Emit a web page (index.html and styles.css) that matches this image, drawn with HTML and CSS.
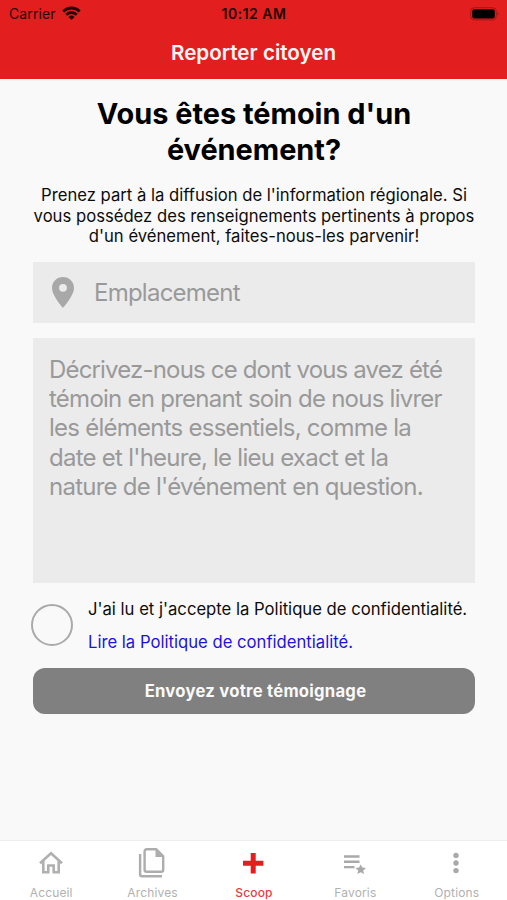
FILE: index.html
```html
<!DOCTYPE html>
<html lang="fr">
<head>
<meta charset="utf-8">
<title>Reporter citoyen</title>
<link rel="stylesheet" href="styles.css">
</head>
<body>
<div class="app">
  <header class="header">
    <div class="status">
      <div class="status-left">
        <span class="carrier">Carrier</span>
        <svg class="wifi" width="19" height="14" viewBox="0 0 19 14"><g fill="none" stroke="#240403" stroke-width="2.8"><path d="M1.3 5.4a11.6 11.6 0 0 1 16.4 0"/><path d="M4.3 8.7a7.3 7.3 0 0 1 10.400 0"/></g><path fill="#240403" d="M9.5 13.900 6.500 10.900a4.300 4.300 0 0 1 6 0z"/></svg>
      </div>
      <span class="time">10:12 AM</span>
      <svg class="battery" width="30" height="14" viewBox="0 0 30 14"><rect x=".7" y=".7" width="25.6" height="12.2" rx="3.6" fill="none" stroke="#a31513"/><rect x="2.2" y="2.2" width="22.6" height="9.2" rx="2.2"/><path fill="#8f1211" d="M27.6 4.8q1.8 2 0 4z"/></svg>
    </div>
    <div class="title">Reporter citoyen</div>
  </header>
  <main class="content">
    <h1 class="heading">Vous êtes témoin d'un<br>événement?</h1>
    <p class="intro">Prenez part à la diffusion de l'information régionale. Si<br>vous possédez des renseignements pertinents à propos<br>d'un événement, faites-nous-les parvenir!</p>
    <div class="field">
      <svg class="pin" width="22" height="31" viewBox="5 2 14 20" preserveAspectRatio="none"><path fill="#a8a8a8" d="M12 2C8.13 2 5 5.13 5 9c0 5.25 7 13 7 13s7-7.75 7-13c0-3.87-3.13-7-7-7zm0 9.500a2.500 2.500 0 1 1 0-5 2.500 2.500 0 0 1 0 5z"/></svg>
      <span>Emplacement</span>
    </div>
    <div class="area"><span class="first">Décrivez-nous ce dont vous avez été</span><br>témoin en prenant soin de nous livrer<br>les éléments essentiels, comme la<br>date et l'heure, le lieu exact et la<br>nature de l'événement en question.</div>
    <div class="consent">
      <span class="radio"></span>
      <div class="consent-text">
        <span class="accept">J'ai lu et j'accepte la Politique de confidentialité.</span>
        <a class="link">Lire la Politique de confidentialité.</a>
      </div>
    </div>
    <div class="button">Envoyez votre témoignage</div>
  </main>
  <nav class="tabs">
    <div class="tab"><svg width="32" height="32" viewBox="0 0 32 32"><path fill="none" stroke="#b0b0b0" stroke-width="2.6" d="M5 16.300 16 6.300 27 16.300M8.300 14v11.200h5v-6.700h5.400v6.700h5V14"/></svg><span>Accueil</span></div>
    <div class="tab"><svg width="32" height="32" viewBox="0 0 32 32"><g fill="none" stroke="#adadad" stroke-width="2.400"><path d="M10.600 2.300h9.600l7 7v13.500a2 2 0 0 1-2 2H10.600a2 2 0 0 1-2-2V4.300a2 2 0 0 1 2-2z"/><path d="M4.100 7v20.200a2 2 0 0 0 2 2H26"/></g><path fill="#adadad" d="M19.500 2v8h8z"/></svg><span>Archives</span></div>
    <div class="tab active"><svg width="32" height="32" viewBox="0 0 32 32"><path fill="#e21f1e" d="M13.700 6h5v7.700h7.700v5h-7.700v7.700h-5v-7.700H6v-5h7.700z"/></svg><span>Scoop</span></div>
    <div class="tab"><svg width="32" height="32" viewBox="0 0 32 32"><g fill="#a9a9a9"><path d="M5 8.300h15.500v2.400H5zM5 13.600h15.500V16H5zM5 18.900h10.500v2.400H5zM21.700 17.400l1.600 3.200 3.700.3-2.800 2.500.8 3.700-3.300-1.900-3.300 1.900.8-3.700-2.800-2.500 3.700-.3z"/></g></svg><span>Favoris</span></div>
    <div class="tab"><svg width="32" height="32" viewBox="0 0 32 32"><g fill="#a9a9a9"><circle cx="16" cy="8.400" r="2.700"/><circle cx="16" cy="16" r="2.700"/><circle cx="16" cy="23.600" r="2.700"/></g></svg><span>Options</span></div>
  </nav>
</div>
</body>
</html>
```
FILE: styles.css
```css
* { box-sizing: border-box; }
body { margin: 0; font-family: Inter, "Liberation Sans", sans-serif; background: #f9f9f9; color: #0c0c0c; }
.app { width: 507px; height: 900px; display: flex; flex-direction: column; white-space: nowrap; overflow: hidden; }
.header { height: 79px; background: #e21f1e; flex: none; }
.status { height: 27px; display: grid; grid-template-columns: 1fr auto 1fr; align-items: center; padding: 0 7px 0 9px; color: #240403; font-size: 14px; }
.status-left { display: flex; align-items: center; gap: 6px; }
.carrier { letter-spacing: .1px; }
.wifi { margin-top: -2px; }
.time { font-weight: 600; letter-spacing: .5px; margin-right: 1px; }
.battery { justify-self: end; }
.title { text-align: center; color: #fff5f4; font-weight: 600; font-size: 20.6px; line-height: 51px; }
.content { flex: 1; padding: 17px 32px 0 33px; }
.heading { margin: 0; text-align: center; font-size: 28.9px; line-height: 36px; font-weight: 700; color: #000; }
.intro { margin: 17px 0 0; text-align: center; font-size: 16.67px; line-height: 20.6px; }
.field { margin-top: 15px; height: 61px; background: #ebebeb; display: flex; align-items: center; gap: 20px; padding-left: 19px; color: #999; font-size: 24px; letter-spacing: -.76px; }
.area { margin-top: 15px; height: 245px; background: #ebebeb; color: #999; padding: 17px 16px; font-size: 24px; line-height: 29.25px; letter-spacing: -.75px; }
.first { letter-spacing: -.83px; }
.consent { display: flex; gap: 15px; margin: 15px 0 0 -2px; height: 56px; }
.radio { width: 42px; height: 42px; border: 2px solid #aaa; border-radius: 50%; margin-top: 6.5px; flex: none; }
.consent-text { display: flex; flex-direction: column; gap: 11px; font-size: 16.67px; line-height: 22px; }
.link { color: #1a12e4; }
.button { margin-top: 14.5px; height: 45.5px; border-radius: 12px; background: #808080; color: #fafafa; font-size: 16.67px; font-weight: 700; letter-spacing: .25px; text-align: center; line-height: 46.5px; padding-left: 3px; }
.tabs { height: 60px; background: #fff; border-top: 1px solid #eee; display: grid; grid-template-columns: repeat(5, 1fr); flex: none; }
.tab { display: flex; flex-direction: column; align-items: center; padding-top: 6px; font-size: 12px; letter-spacing: .15px; color: #b1b1b1; line-height: 16px; gap: 6px; }
.tab span { padding-left: 1px; }
.active { color: #e2403f; font-weight: 500; }
```
